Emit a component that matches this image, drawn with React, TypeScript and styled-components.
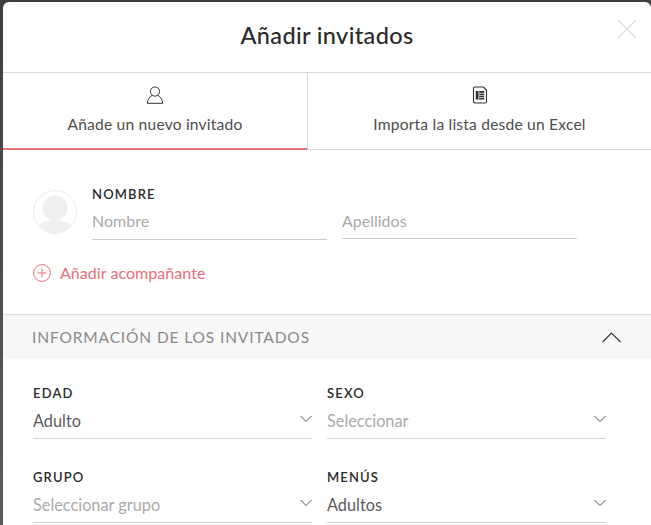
import React from 'react'
import styled, { createGlobalStyle } from 'styled-components'

const GlobalStyle = createGlobalStyle`
  html, body {
    margin: 0;
    height: 525px;
    overflow: hidden;
    background: #4d4d4d;
  }
  * { box-sizing: border-box; }
`

const Backdrop = styled.div`
  width: 651px;
  height: 525px;
  padding: 2px 0 0 3px;
  overflow: hidden;
  background: linear-gradient(180deg, #3f3f3f 0%, #5c5c5c 100%);
`

const Modal = styled.div`
  width: 648px;
  height: 523px;
  background: #fff;
  border-radius: 6px 6px 0 0;
  overflow: hidden;
  position: relative;
  font-family: 'Lato', sans-serif;
  color: #333;
`

const Title = styled.h1`
  margin: 0;
  height: 70px;
  display: flex;
  align-items: center;
  justify-content: center;
  padding-bottom: 4px;
  font-size: 23.5px;
  font-weight: 500;
  letter-spacing: 0.35px;
  color: #2a2a2a;
`

const CloseButton = styled.button`
  position: absolute;
  top: 17px;
  right: 14px;
  width: 20px;
  height: 20px;
  padding: 0;
  border: 0;
  background: none;
  svg { display: block; }
`

const Tabs = styled.div`
  display: flex;
  height: 78px;
  border-top: 1px solid #d9d9d9;
`

const Tab = styled.div<{ $active?: boolean }>`
  width: ${(p) => (p.$active ? '304px' : '344px')};
  display: flex;
  flex-direction: column;
  align-items: center;
  padding-top: 13px;
  gap: 11px;
  font-size: 15.6px;
  letter-spacing: 0.2px;
  color: #4d4d4d;
  border-bottom: ${(p) => (p.$active ? '2px solid #e57373' : '1px solid #d9d9d9')};
  border-left: ${(p) => (p.$active ? '0' : '1px solid #d9d9d9')};
  svg { display: block; }
`

const GuestSection = styled.div`
  padding: 36px 0 0 30px;
  height: 164px;
`

const GuestRow = styled.div`
  display: flex;
  gap: 15px;
`

const Avatar = styled.div`
  width: 44px;
  height: 44px;
  margin-top: 4px;
  border-radius: 50%;
  border: 1px solid #ececec;
  overflow: hidden;
  flex: none;
  svg { display: block; }
`

const NameFields = styled.div`
  display: grid;
  grid-template-columns: 235px 235px;
  column-gap: 15px;
  align-items: start;
`

const FieldLabel = styled.div`
  grid-column: 1 / span 2;
  font-size: 13px;
  line-height: 16px;
  font-weight: 600;
  letter-spacing: 1.15px;
  color: #2b2b2b;
`

const NameInput = styled.div<{ $offset?: boolean }>`
  height: ${(p) => (p.$offset ? '32px' : '33px')};
  margin-top: 5px;
  padding-top: 4px;
  font-size: 16px;
  line-height: 20px;
  color: #aaa;
  border-bottom: 1px solid #ccc;
`

const AddLink = styled.div`
  display: flex;
  align-items: center;
  gap: 9px;
  margin-top: 23px;
  font-size: 16px;
  letter-spacing: 0.05px;
  color: #e9707a;
  svg { display: block; }
`

const InfoBar = styled.div`
  height: 45px;
  display: flex;
  align-items: center;
  justify-content: space-between;
  padding: 0 30px 0 29px;
  background: #f7f7f7;
  border-top: 1px solid #dcdcdc;
  font-size: 15.5px;
  letter-spacing: 0.87px;
  color: #8a8a8a;
  svg { display: block; }
`

const FieldGrid = styled.div`
  display: grid;
  grid-template-columns: 279px 279px;
  column-gap: 15px;
  row-gap: 30px;
  padding: 26px 0 0 30px;
`

const SelectField = styled.div``

const SelectLabel = styled(FieldLabel)``

const SelectBox = styled.div<{ $placeholder?: boolean }>`
  height: 37px;
  margin-top: 1px;
  display: flex;
  align-items: flex-start;
  justify-content: space-between;
  padding-top: 9px;
  font-size: 16.3px;
  line-height: 20px;
  color: ${(p) => (p.$placeholder ? '#aaa' : '#5c5c5c')};
  border-bottom: 1px solid #d2d2d2;
  svg { display: block; margin-top: 4px; }
`

const Chevron = () => (
  <svg width="12" height="8" viewBox="0 0 12 8" fill="none" stroke="#555" strokeWidth="1">
    <path d="M0.5 1 L6 6.5 L11.5 1" />
  </svg>
)

const fields = [
  { label: 'EDAD', value: 'Adulto' },
  { label: 'SEXO', value: 'Seleccionar', placeholder: true },
  { label: 'GRUPO', value: 'Seleccionar grupo', placeholder: true },
  { label: 'MENÚS', value: 'Adultos' },
]

export default function App() {
  return (
    <>
      <GlobalStyle />
      <Backdrop>
        <Modal>
          <Title>Añadir invitados</Title>
          <CloseButton aria-label="Cerrar">
            <svg width="20" height="20" viewBox="0 0 20 20" fill="none" stroke="#dcdcdc" strokeWidth="1.3">
              <path d="M1 1 L19 19 M19 1 L1 19" />
            </svg>
          </CloseButton>
          <Tabs>
            <Tab $active>
              <svg width="18" height="18" viewBox="0 0 18 18" fill="none" stroke="#333" strokeWidth="1">
                <circle cx="9" cy="5.5" r="4.6" />
                <path d="M6.2 9.4 C3.6 10.6 1.6 13.6 1.3 17.3 H16.7 C16.4 13.6 14.4 10.6 11.8 9.4" />
              </svg>
              <span>Añade un nuevo invitado</span>
            </Tab>
            <Tab>
              <svg width="18" height="18" viewBox="0 0 18 18" fill="none" stroke="#333" strokeWidth="1.1">
                <path d="M2.5 2.2 Q2.5 1 3.7 1 H12.5 L15.5 4 V15.8 Q15.5 17 14.3 17 H3.7 Q2.5 17 2.5 15.8 Z" />
                <path d="M4.8 5 H13.2 V13.6 H4.8 Z" fill="#333" stroke="none" />
                <path d="M8 7.3 H13.2 M8 9.4 H13.2 M8 11.5 H13.2 M7.8 5 V13.6" stroke="#fff" strokeWidth="0.7" />
              </svg>
              <span>Importa la lista desde un Excel</span>
            </Tab>
          </Tabs>
          <GuestSection>
            <GuestRow>
              <Avatar>
                <svg width="42" height="42" viewBox="0 0 42 42" fill="#efefef">
                  <circle cx="21" cy="17" r="12.5" />
                  <ellipse cx="21" cy="41" rx="20" ry="12" />
                </svg>
              </Avatar>
              <NameFields>
                <FieldLabel>NOMBRE</FieldLabel>
                <NameInput>Nombre</NameInput>
                <NameInput $offset>Apellidos</NameInput>
              </NameFields>
            </GuestRow>
            <AddLink>
              <svg width="18" height="18" viewBox="0 0 18 18" fill="none" stroke="#e9707a" strokeWidth="1">
                <circle cx="9" cy="9" r="8.4" />
                <path d="M9 4.5 V13.5 M4.5 9 H13.5" />
              </svg>
              <span>Añadir acompañante</span>
            </AddLink>
          </GuestSection>
          <InfoBar>
            <span>INFORMACIÓN DE LOS INVITADOS</span>
            <svg width="19" height="11" viewBox="0 0 19 11" fill="none" stroke="#333" strokeWidth="1.1">
              <path d="M0.5 10 L9.5 1 L18.5 10" />
            </svg>
          </InfoBar>
          <FieldGrid>
            {fields.map((f) => (
              <SelectField key={f.label}>
                <SelectLabel>{f.label}</SelectLabel>
                <SelectBox $placeholder={f.placeholder}>
                  <span>{f.value}</span>
                  <Chevron />
                </SelectBox>
              </SelectField>
            ))}
          </FieldGrid>
        </Modal>
      </Backdrop>
    </>
  )
}
